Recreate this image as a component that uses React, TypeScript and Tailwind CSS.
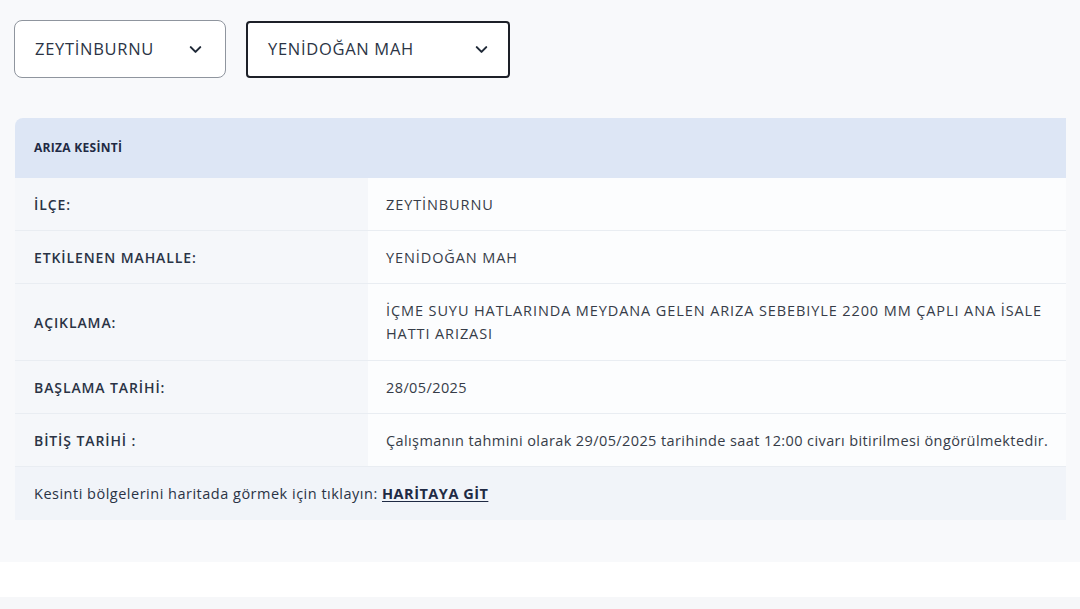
import React from 'react';
import { ChevronDown } from 'lucide-react';

const rows: { label: string; value: React.ReactNode; caps?: boolean; tall?: boolean }[] = [
  { label: 'İLÇE:', value: 'ZEYTİNBURNU', caps: true },
  { label: 'ETKİLENEN MAHALLE:', value: 'YENİDOĞAN MAH', caps: true },
  {
    label: 'AÇIKLAMA:',
    value: (
      <>
        İÇME SUYU HATLARINDA MEYDANA GELEN ARIZA SEBEBIYLE 2200 MM ÇAPLI ANA İSALE
        <br />
        HATTI ARIZASI
      </>
    ),
    caps: true,
    tall: true,
  },
  { label: 'BAŞLAMA TARİHİ:', value: '28/05/2025' },
  {
    label: 'BİTİŞ TARİHİ :',
    value: 'Çalışmanın tahmini olarak 29/05/2025 tarihinde saat 12:00 civarı bitirilmesi öngörülmektedir.',
  },
];

const App: React.FC = () => {
  return (
    <div className="w-[1080px] h-[609px] overflow-hidden bg-[#f8f9fb] text-[#2a3242] font-['Open_Sans','Liberation_Sans',sans-serif] flex flex-col">
      <div className="flex-1 flex flex-col">
        {/* Filters */}
        <div className="flex items-center gap-5 pt-5 pl-[14px]">
          <div className="w-[212px] h-[58px] rounded-lg border border-[#8f959e] bg-white flex items-center justify-between pl-5 pr-[20px]">
            <span className="text-[16.5px] tracking-[0.7px] text-[#2b3445]">ZEYTİNBURNU</span>
            <ChevronDown className="w-[19px] h-[19px] text-[#1f2937]" strokeWidth={2.6} />
          </div>
          <div className="w-[264px] h-[57px] rounded-[4px] border-2 border-[#1d2028] bg-white flex items-center justify-between pl-5 pr-[17px]">
            <span className="text-[16.5px] tracking-[0.7px] text-[#2b3445]">YENİDOĞAN MAH</span>
            <ChevronDown className="w-[19px] h-[19px] text-[#1f2937]" strokeWidth={2.6} />
          </div>
        </div>

        {/* Card */}
        <div className="mt-10 ml-[15px] w-[1051px] rounded-tl-lg overflow-hidden text-[14.5px]">
          <div className="h-[60px] bg-[#dde6f5] flex items-center pl-[19px]">
            <span className="font-bold text-[12px] text-[#1f2a44] tracking-[0.3px]">ARIZA KESİNTİ</span>
          </div>
          {rows.map((r) => (
            <div
              key={r.label}
              className={`flex border-b border-[#e9edf2] ${r.tall ? 'h-[77px]' : 'h-[53px]'}`}
            >
              <div className="w-[353px] bg-[#f5f7fa] flex items-center pl-[19px] text-[14px] tracking-[0.9px] font-semibold text-[#2a3345]">
                {r.label}
              </div>
              <div
                className={`flex-1 bg-[#fcfdfe] flex items-center pl-[18px] leading-[23px] text-[#363c48] ${
                  r.caps ? 'tracking-[0.9px]' : 'tracking-[0.4px]'
                }`}
              >
                <span>{r.value}</span>
              </div>
            </div>
          ))}
          <div className="h-[53px] bg-[#f1f4f9] flex items-center pl-[19px] tracking-[0.5px] text-[#2a3345]">
            Kesinti bölgelerini haritada görmek için tıklayın:&nbsp;
            <a className="font-bold underline underline-offset-2 text-[#1f2a44]">HARİTAYA GİT</a>
          </div>
        </div>
      </div>
      <div className="h-[35px] bg-white shrink-0" />
      <div className="h-[12px] bg-[#f6f7f9] shrink-0" />
    </div>
  );
};

export default App;
